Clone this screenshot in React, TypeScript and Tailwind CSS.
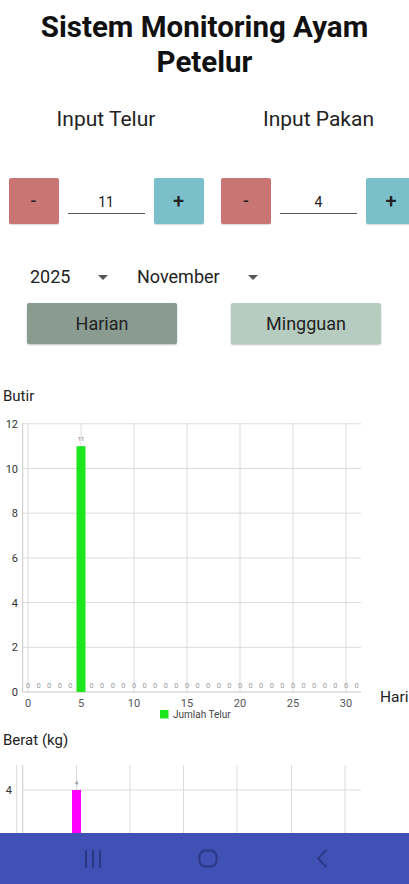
import React from "react";

const F = "Roboto, 'Noto Sans', Arial, sans-serif";

function Stepper({ value }: { value: string }) {
  return (
    <div className="flex items-start gap-[9px]">
      <div className="w-[50px] h-[46px] bg-[#c97573] rounded-[2px] flex items-center justify-center text-[17px] font-medium text-[#222] shadow-[0_1px_1px_rgba(0,0,0,0.15)]">-</div>
      <div className="w-[77px] h-[36px] border-b border-[#555] pt-[16px] text-center text-[14px] leading-[16px] text-[#222]">{value}</div>
      <div className="w-[50px] h-[46px] bg-[#7bbfca] rounded-[2px] flex items-center justify-center text-[20px] font-medium text-[#222] shadow-[0_1px_1px_rgba(0,0,0,0.15)]">+</div>
    </div>
  );
}

function Caret() {
  return (
    <svg width="10" height="5" viewBox="0 0 10 5" className="shrink-0">
      <path d="M0 0 L10 0 L5 5 Z" fill="#555" />
    </svg>
  );
}

function Chart1() {
  const x0 = 28;
  const ux = 10.6;
  const y0 = 692;
  const uy = 22.35;
  const xs = (v: number) => x0 + v * ux;
  const ys = (v: number) => y0 - v * uy;
  const T = 380;
  const hLines = [2, 4, 6, 8, 10, 12];
  const vLines = [0, 5, 10, 15, 20, 25, 30];
  const days = Array.from({ length: 32 }, (_, i) => i).filter((d) => d !== 5);
  return (
    <svg width="409" height="350" viewBox={`0 ${T} 409 350`} className="block" style={{ fontFamily: F }}>
      <text x="3" y="401" fontSize="15" fill="#222">Butir</text>
      {hLines.map((v) => (
        <line key={"h" + v} x1="22.7" x2="361" y1={ys(v)} y2={ys(v)} stroke="#dcdcdc" strokeWidth="1" />
      ))}
      {vLines.map((v) => (
        <line key={"v" + v} x1={xs(v)} x2={xs(v)} y1="423" y2={y0} stroke="#dcdcdc" strokeWidth="1" />
      ))}
      <line x1="22.7" x2="22.7" y1="423" y2={y0} stroke="#c8c8c8" strokeWidth="1" />
      <line x1="22.7" x2="361" y1={y0} y2={y0} stroke="#c8c8c8" strokeWidth="1" />
      {[0, 2, 4, 6, 8, 10, 12].map((v) => (
        <text key={"yl" + v} x="18" y={ys(v) + 4} fontSize="11" fill="#333" textAnchor="end">{v}</text>
      ))}
      {vLines.map((v) => (
        <text key={"xl" + v} x={xs(v)} y="707" fontSize="11" fill="#555" textAnchor="middle">{v}</text>
      ))}
      <rect x={xs(5) - 4.5} y={ys(11)} width="9" height={11 * uy} fill="#1ee61e" />
      <text x={xs(5)} y={ys(11) - 5} fontSize="6" fill="#777" textAnchor="middle">11</text>
      {days.map((d) => (
        <text key={"z" + d} x={xs(d)} y="688" fontSize="7.5" fill="#9a9a9a" textAnchor="middle">0</text>
      ))}
      <text x="380" y="702" fontSize="15.5" fill="#222">Hari</text>
      <rect x="160" y="710" width="8.5" height="8.5" fill="#1ee61e" />
      <text x="173" y="718" fontSize="10" fill="#444">Jumlah Telur</text>
    </svg>
  );
}

function Chart2() {
  const T = 730;
  const vLines = [16.7, 76.5, 130, 183.5, 237, 291.5, 345];
  return (
    <svg width="409" height="154" viewBox={`0 ${T} 409 154`} className="block" style={{ fontFamily: F }}>
      <text x="3" y="745" fontSize="15" fill="#222">Berat (kg)</text>
      {vLines.map((x) => (
        <line key={x} x1={x} x2={x} y1="765" y2="884" stroke="#dcdcdc" strokeWidth="1" />
      ))}
      <line x1="22.7" x2="22.7" y1="765" y2="884" stroke="#c8c8c8" strokeWidth="1" />
      <line x1="22.7" x2="361" y1="790" y2="790" stroke="#dcdcdc" strokeWidth="1" />
      <text x="12" y="794" fontSize="11" fill="#333" textAnchor="end">4</text>
      <rect x="72" y="790" width="9" height="94" fill="#ff00ff" />
      <text x="76.5" y="785" fontSize="6" fill="#777" textAnchor="middle">4</text>
    </svg>
  );
}

export default function App() {
  return (
    <div className="relative w-[409px] h-[884px] overflow-hidden bg-white" style={{ fontFamily: F }}>
      <h1 className="pt-[10px] text-center text-[29.5px] leading-[35px] font-bold text-[#111]">
        Sistem Monitoring Ayam
        <br />
        Petelur
      </h1>

      <div className="mt-[27px] flex">
        <div className="w-[212px] shrink-0 text-center text-[21px] leading-[24px] text-[#222]">Input Telur</div>
        <div className="w-[213px] shrink-0 text-center text-[21px] leading-[24px] text-[#222]">Input Pakan</div>
      </div>

      <div className="mt-[47px] flex">
        <div className="w-[212px] shrink-0 flex justify-center">
          <Stepper value="11" />
        </div>
        <div className="w-[213px] shrink-0 flex justify-center">
          <Stepper value="4" />
        </div>
      </div>

      <div className="mt-[41px] flex items-center h-[24px] pl-[30px] text-[18px] leading-[24px] text-[#222]">
        <span className="w-[68px]">2025</span>
        <Caret />
        <span className="w-[29px]" />
        <span className="w-[111px]">November</span>
        <Caret />
      </div>

      <div className="mt-[14px] flex pl-[27px] gap-[54px]">
        <div className="w-[150px] h-[41px] bg-[#8a9b91] rounded-[2px] flex items-center justify-center text-[18px] text-[#222] shadow-[0_1px_2px_rgba(0,0,0,0.25)]">Harian</div>
        <div className="w-[150px] h-[41px] bg-[#b7ccc0] rounded-[2px] flex items-center justify-center text-[18px] text-[#222] shadow-[0_1px_2px_rgba(0,0,0,0.25)]">Mingguan</div>
      </div>

      <div className="mt-[36px]">
        <Chart1 />
        <Chart2 />
      </div>

      <div className="absolute left-0 bottom-0 w-[409px] h-[51px] bg-[#3f51b5] flex items-center">
        <svg width="20" height="18" viewBox="0 0 20 18" className="ml-[83px] shrink-0">
          <path d="M3 1 V17 M10 1 V17 M17 1 V17" stroke="#2b3886" strokeWidth="2.2" strokeLinecap="round" fill="none" />
        </svg>
        <svg width="20" height="19" viewBox="0 0 20 19" className="ml-[95px] shrink-0">
          <rect x="1.5" y="1.5" width="17" height="16" rx="6" stroke="#2b3886" strokeWidth="2" fill="none" />
        </svg>
        <svg width="14" height="19" viewBox="0 0 14 19" className="ml-[97px] shrink-0">
          <path d="M11 1.5 L3 9.5 L11 17.5" stroke="#2b3886" strokeWidth="2" strokeLinecap="round" strokeLinejoin="round" fill="none" />
        </svg>
      </div>
    </div>
  );
}
